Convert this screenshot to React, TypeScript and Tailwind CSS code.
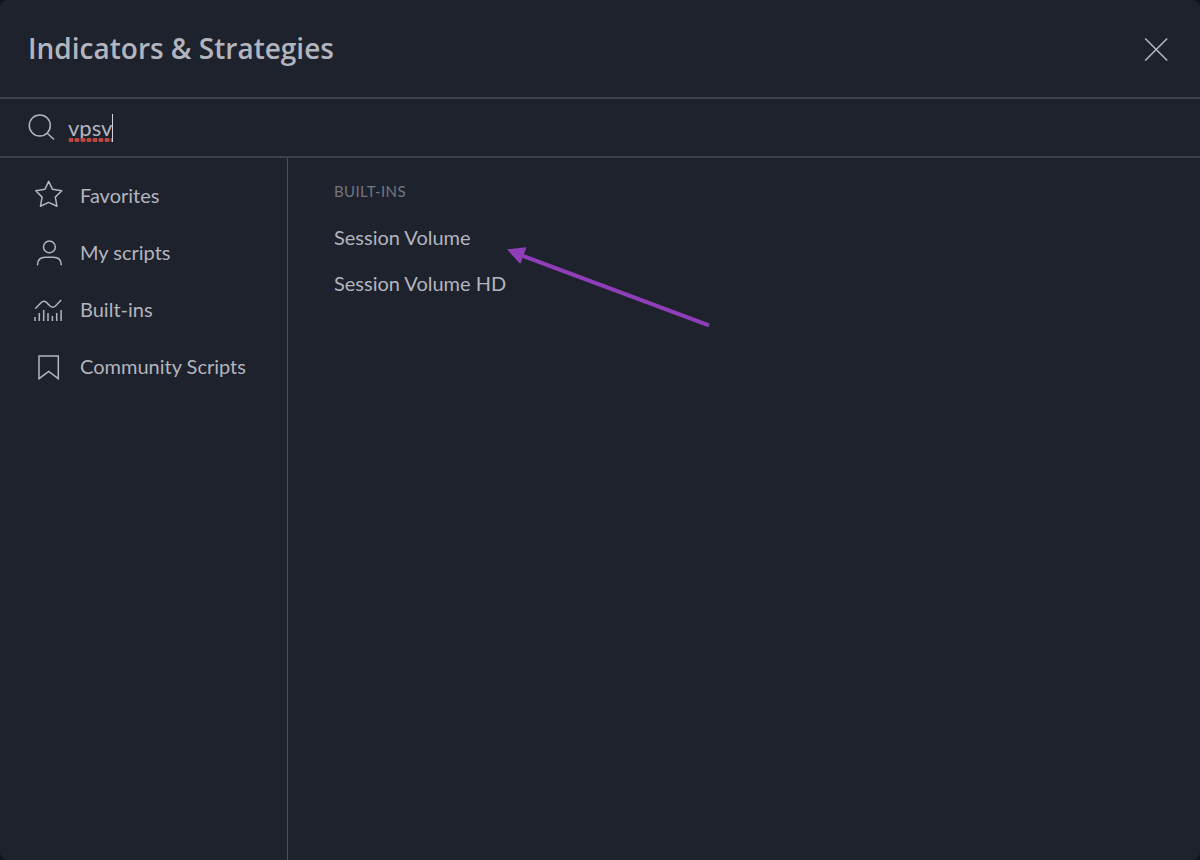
import React, { useState } from 'react';

interface Category {
  label: string;
  icon: React.ReactNode;
}

const iconProps = {
  width: 30,
  height: 30,
  viewBox: '0 0 30 30',
  fill: 'none',
  stroke: 'currentColor',
  strokeWidth: 1.5,
  'aria-hidden': true,
};

const StarIcon = () => (
  <svg {...iconProps} strokeLinejoin="round">
    <path d="M14.7 1.4 L18.5 9.3 L27.8 10.7 L21.3 17.1 L23 26.3 L14.7 22.4 L6.4 26.3 L8.1 17.1 L1.8 10.7 L10.9 9.3 Z" />
  </svg>
);

const UserIcon = () => (
  <svg {...iconProps} strokeLinecap="round">
    <circle cx="15.4" cy="9.9" r="5.9" />
    <path d="M3.6 27.8 C3.6 22.8 6.6 20.2 11.4 20.2 H19.4 C24.2 20.2 27.2 22.8 27.2 27.8" />
  </svg>
);

const ChartIcon = () => (
  <svg {...iconProps}>
    <path d="M1.2 14.8 L7 8.7 Q9.7 6 12.4 8.4 L16 12 Q18.7 14.4 21.4 12 L27.2 5.9" />
    <path d="M1 23 V27 M5.3 19 V27 M9.7 16 V27 M14 19 V27 M18.4 22 V27 M22.7 19 V27 M27.1 16 V27" />
  </svg>
);

const BookmarkIcon = () => (
  <svg {...iconProps}>
    <path d="M5 5 H24.3 V27.7 L14.7 20.4 L5 27.7 Z" />
  </svg>
);

const categories: Category[] = [
  { label: 'Favorites', icon: <StarIcon /> },
  { label: 'My scripts', icon: <UserIcon /> },
  { label: 'Built-ins', icon: <ChartIcon /> },
  { label: 'Community Scripts', icon: <BookmarkIcon /> },
];

const results = ['Session Volume', 'Session Volume HD'];

const DialogHeader = () => (
  <header className="flex items-center justify-between border-b-2 border-[#3d414b] p-7">
    <h2 className="font-['Open_Sans','Trebuchet_MS',sans-serif] text-[28px] leading-[41px] font-semibold">
      Indicators &amp; Strategies
    </h2>
    <button type="button" aria-label="Close" className="flex size-8 items-center justify-center">
      <svg width="32" height="32" viewBox="0 0 32 32" fill="none" stroke="currentColor" strokeWidth="1.6">
        <path d="M5.2 5.5 L27.2 27.5 M27.2 5.5 L5.2 27.5" />
      </svg>
    </button>
  </header>
);

const SearchBar = () => {
  const [query, setQuery] = useState('vpsv');

  return (
    <div className="flex h-[59px] items-center border-b-2 border-[#3d414b] pl-7">
      <label htmlFor="indicator-search" className="flex w-10 shrink-0" aria-label="Search">
        <svg width="28" height="28" viewBox="0 0 28 28" fill="none" stroke="currentColor" strokeWidth="1.5" aria-hidden="true">
          <circle cx="11.8" cy="11.5" r="10.5" />
          <path d="M19 19 L26 25.5" />
        </svg>
      </label>
      <div className="relative">
        <input
          id="indicator-search"
          type="text"
          spellCheck={false}
          value={query}
          onChange={(e) => setQuery(e.target.value)}
          className="block field-sizing-content bg-transparent text-[22px] leading-7 caret-transparent outline-none"
        />
        {/* spelling mark and caret */}
        <span className="absolute inset-x-0 bottom-0 h-1 bg-[radial-gradient(circle,#c0453f_2px,transparent_3px)] bg-[length:6px_4px]" />
        <span className="absolute inset-y-0 left-full w-px bg-[#d1d4dc]" />
      </div>
    </div>
  );
};

const Sidebar = () => (
  <nav className="w-72 shrink-0 border-r border-[#4a4d57] pt-2">
    {categories.map((category) => (
      <button key={category.label} type="button" className="flex h-[57px] w-full items-center gap-4 pl-[34px] text-left">
        {category.icon}
        <span>{category.label}</span>
      </button>
    ))}
  </nav>
);

const Results = () => (
  <main className="relative flex-1 pt-2.5 pl-[46px]">
    <h3 className="text-[15px] leading-[46px] tracking-wide text-[#737680]">BUILT-INS</h3>
    <ul>
      {results.map((name) => (
        <li key={name}>
          <button type="button" className="block w-full text-left leading-[46px]">
            {name}
          </button>
        </li>
      ))}
    </ul>
    <svg
      className="pointer-events-none absolute top-[84px] left-[214px]"
      width="214"
      height="90"
      viewBox="0 0 214 90"
      aria-hidden="true"
    >
      <path d="M18 12.8 L207 83.3" stroke="#903eb8" strokeWidth="4" />
      <path d="M5 7.3 L24.5 5.3 L18.3 22 Z" fill="#903eb8" />
    </svg>
  </main>
);

const App: React.FC = () => {
  return (
    <div className="min-h-screen bg-[#12151e]">
      <div
        role="dialog"
        aria-label="Indicators & Strategies"
        className="flex min-h-screen flex-col rounded-lg bg-[#1e222d] font-['Lato','Trebuchet_MS',sans-serif] text-xl text-[#b2b5be]"
      >
        <DialogHeader />
        <SearchBar />
        <div className="flex flex-1">
          <Sidebar />
          <Results />
        </div>
      </div>
    </div>
  );
};

export default App;
